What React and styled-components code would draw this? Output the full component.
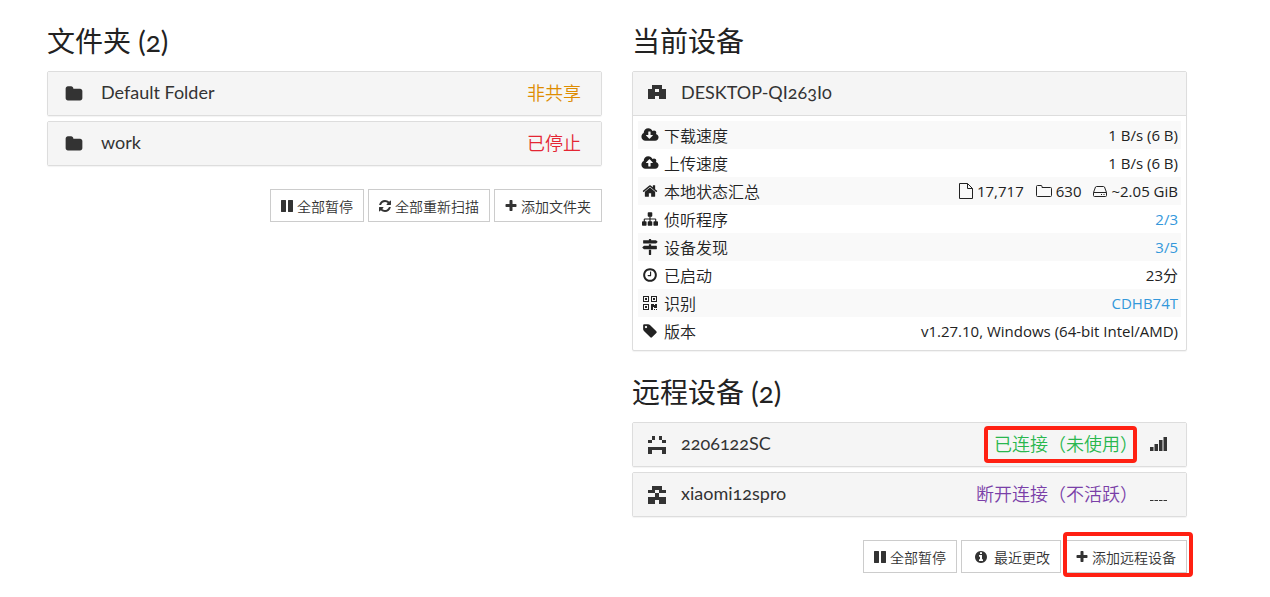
import React from 'react';
import styled, { createGlobalStyle, css } from 'styled-components';

const GlobalStyle = createGlobalStyle`
    * {
        box-sizing: border-box;
    }

    body {
        margin: 0;
        background: #fff;
        color: #222;
        font-family: "Open Sans", "Noto Sans CJK SC", sans-serif;
        font-size: 15px;
        line-height: 20px;
    }
`;

// 1792 units per em, like the icon font
const glyphs = {
    folder: 'M1728 608v704q0 92-66 158t-158 66h-1216q-92 0-158-66t-66-158v-960q0-92 66-158t158-66h320q92 0 158 66t66 158v32h672q92 0 158 66t66 158z',
    pause: 'M1664 192v1408q0 26-19 45t-45 19h-512q-26 0-45-19t-19-45v-1408q0-26 19-45t45-19h512q26 0 45 19t19 45zm-896 0v1408q0 26-19 45t-45 19h-512q-26 0-45-19t-19-45v-1408q0-26 19-45t45-19h512q26 0 45 19t19 45z',
    refresh: 'M1639 1056q0 5-1 7-64 268-268 434.5t-478 166.5q-146 0-282.5-55t-243.5-157l-129 129q-19 19-45 19t-45-19-19-45v-448q0-26 19-45t45-19h448q26 0 45 19t19 45-19 45l-137 137q71 66 161 102t187 36q134 0 250-65t186-179q11-17 53-117 8-23 30-23h192q13 0 22.5 9.5t9.5 22.5zm25-800v448q0 26-19 45t-45 19h-448q-26 0-45-19t-19-45 19-45l138-138q-148-137-349-137-134 0-250 65t-186 179q-11 17-53 117-8 23-30 23h-199q-13 0-22.5-9.5t-9.5-22.5v-7q65-268 270-434.5t480-166.5q146 0 284 55.5t245 156.5l130-129q19-19 45-19t45 19 19 45z',
    plus: 'M1600 736v192q0 40-28 68t-68 28h-416v416q0 40-28 68t-68 28h-192q-40 0-68-28t-28-68v-416h-416q-40 0-68-28t-28-68v-192q0-40 28-68t68-28h416v-416q0-40 28-68t68-28h192q40 0 68 28t28 68v416h416q40 0 68 28t28 68z',
    info: 'M1152 1376v-160q0-14-9-23t-23-9h-96v-512q0-14-9-23t-23-9h-320q-14 0-23 9t-9 23v160q0 14 9 23t23 9h96v320h-96q-14 0-23 9t-9 23v160q0 14 9 23t23 9h448q14 0 23-9t9-23zm-128-896v-160q0-14-9-23t-23-9h-192q-14 0-23 9t-9 23v160q0 14 9 23t23 9h192q14 0 23-9t9-23zm640 416q0 209-103 385.5t-279.5 279.5-385.5 103-385.5-103-279.5-279.5-103-385.5 103-385.5 279.5-279.5 385.5-103 385.5 103 279.5 279.5 103 385.5z',
    download: 'M1216 928q0-14-9-23t-23-9h-224v-352q0-13-9.5-22.5t-22.5-9.5h-192q-13 0-22.5 9.5t-9.5 22.5v352h-224q-13 0-22.5 9.5t-9.5 22.5q0 14 9 23l352 352q9 9 23 9t23-9l351-351q10-12 10-24zm640 224q0 159-112.5 271.5t-271.5 112.5h-1088q-185 0-316.5-131.5t-131.5-316.5q0-130 70-240t188-165q-2-30-2-43 0-212 150-362t362-150q156 0 285.5 87t188.5 231q71-62 166-62 106 0 181 75t75 181q0 76-41 138 130 31 213.5 135.5t83.5 238.5z',
    upload: 'M1216 864q0-14-9-23l-352-352q-9-9-23-9t-23 9l-351 351q-10 12-10 24 0 14 9 23t23 9h224v352q0 13 9.5 22.5t22.5 9.5h192q13 0 22.5-9.5t9.5-22.5v-352h224q13 0 22.5-9.5t9.5-22.5zm640 288q0 159-112.5 271.5t-271.5 112.5h-1088q-185 0-316.5-131.5t-131.5-316.5q0-130 70-240t188-165q-2-30-2-43 0-212 150-362t362-150q156 0 285.5 87t188.5 231q71-62 166-62 106 0 181 75t75 181q0 76-41 138 130 31 213.5 135.5t83.5 238.5z',
    home: 'M1472 992v480q0 26-19 45t-45 19h-384v-384h-256v384h-384q-26 0-45-19t-19-45v-480q0-1 .5-3t.5-3l575-474 575 474q1 2 1 6zm223-69l-62 74q-8 9-21 11h-3q-13 0-21-7l-692-577-692 577q-12 8-24 7-13-2-21-11l-62-74q-8-10-7-23.5t11-21.5l719-599q32-26 76-26t76 26l244 204v-195q0-14 9-23t23-9h192q14 0 23 9t9 23v408l219 182q10 8 11 21.5t-7 23.5z',
    sitemap: 'M1792 1248v320q0 40-28 68t-68 28h-320q-40 0-68-28t-28-68v-320q0-40 28-68t68-28h96v-192h-512v192h96q40 0 68 28t28 68v320q0 40-28 68t-68 28h-320q-40 0-68-28t-28-68v-320q0-40 28-68t68-28h96v-192h-512v192h96q40 0 68 28t28 68v320q0 40-28 68t-68 28h-320q-40 0-68-28t-28-68v-320q0-40 28-68t68-28h96v-192q0-52 38-90t90-38h512v-192h-96q-40 0-68-28t-28-68v-320q0-40 28-68t68-28h320q40 0 68 28t28 68v320q0 40-28 68t-68 28h-96v192h512q52 0 90 38t38 90v192h96q40 0 68 28t28 68z',
    signs: 'M1745 297q10 10 10 23t-10 23l-141 141q-28 28-68 28h-1344q-26 0-45-19t-19-45v-256q0-26 19-45t45-19h576v-64q0-26 19-45t45-19h128q26 0 45 19t19 45v64h512q40 0 68 28zm-977 919h256v512q0 26-19 45t-45 19h-128q-26 0-45-19t-19-45v-512zm832-448q26 0 45 19t19 45v256q0 26-19 45t-45 19h-1344q-40 0-68-28l-141-141q-10-10-10-23t10-23l141-141q28-28 68-28h512v-192h256v192h576z',
    clock: 'M1024 544v448q0 14-9 23t-23 9h-320q-14 0-23-9t-9-23v-64q0-14 9-23t23-9h224v-352q0-14 9-23t23-9h64q14 0 23 9t9 23zm416 352q0-148-73-273t-198-198-273-73-273 73-198 198-73 273 73 273 198 198 273 73 273-73 198-198 73-273zm224 0q0 209-103 385.5t-279.5 279.5-385.5 103-385.5-103-279.5-279.5-103-385.5 103-385.5 279.5-279.5 385.5-103 385.5 103 279.5 279.5 103 385.5z',
    tag: 'M576 448q0-53-37.5-90.5t-90.5-37.5-90.5 37.5-37.5 90.5 37.5 90.5 90.5 37.5 90.5-37.5 37.5-90.5zm1067 576q0 53-37 90l-491 492q-39 37-91 37-53 0-90-37l-715-716q-38-37-64.5-101t-26.5-117v-416q0-52 38-90t90-38h416q53 0 117 26.5t102 64.5l715 714q37 39 37 91z'
};

const Glyph = ({ name, size = 16 }) => (
    <GlyphSvg viewBox="0 0 1792 1792" width={size} height={size} aria-hidden="true">
        <path d={glyphs[name]} />
    </GlyphSvg>
);

const QrGlyph = () => (
    <GlyphSvg viewBox="0 0 16 16" width="16" height="16" aria-hidden="true">
        <path
            fillRule="evenodd"
            d="M1 1h6v6H1zM2 2v4h4V2zM9 1h6v6H9zM10 2v4h4V2zM1 9h6v6H1zM2 10v4h4v-4zM3 3h2v2H3zM11 3h2v2h-2zM3 11h2v2H3zM9 9h3v1h1V9h2v4h-3v-1h-1v3H9zM12 14h1v1h-1zM14 14h1v1h-1z"
        />
    </GlyphSvg>
);

const FileGlyph = () => (
    <LineSvg viewBox="0 0 14 16" width="14" height="16" aria-hidden="true">
        <path d="M.5.5h8l5 5v10H.5zM8.5.5v5h5" />
    </LineSvg>
);

const FolderGlyph = () => (
    <LineSvg viewBox="0 0 16 16" width="16" height="16" aria-hidden="true">
        <path d="M.5 3.5q0-1 1-1h3.500q1 0 1 1v1h8.500q1 0 1 1v7q0 1-1 1h-13q-1 0-1-1z" />
    </LineSvg>
);

const DiskGlyph = () => (
    <LineSvg viewBox="0 0 14 16" width="14" height="16" aria-hidden="true">
        <path d="M.5 9.500h13v3q0 1-1 1h-11q-1 0-1-1zM.5 9.500l2-5.500q.3-.5 1-.5h7q.7 0 1 .5l2 5.500M8 11.500h1M10.500 11.500h1" />
    </LineSvg>
);

// five columns by five rows, "#" is a filled square
const Identicon = ({ rows }) => (
    <GlyphSvg viewBox="0 0 5 5" width="18" height="18" shapeRendering="crispEdges" aria-hidden="true">
        {rows.map((row, y) =>
            row.split('').map((cell, x) => cell === '#' && <rect key={`${x}-${y}`} x={x} y={y} width="1" height="1" />)
        )}
    </GlyphSvg>
);

const Signal = ({ bars }) => (
    <GlyphSvg viewBox="0 0 18 18" width="18" height="18" aria-hidden="true">
        {bars.map((height, i) => (
            <rect key={i} x={i * 4.5} y={15 - height} width="3.5" height={height} />
        ))}
    </GlyphSvg>
);

const LocalState = () => (
    <Totals>
        <Total><FileGlyph />17,717</Total>
        <Total><FolderGlyph />630</Total>
        <Total><DiskGlyph />~2.05 GiB</Total>
    </Totals>
);

const folders = [
    { name: 'Default Folder', status: '非共享', color: '#de8c00' },
    { name: 'work', status: '已停止', color: '#e42533' }
];

const devices = [
    {
        name: '2206122SC',
        status: '已连接（未使用）',
        color: '#29b74e',
        marker: '-7px 1px -6px -10px',
        icon: ['.#.#.', '#...#', '.....', '#####', '#...#'],
        bars: [4, 7, 11, 14]
    },
    {
        name: 'xiaomi12spro',
        status: '断开连接（不活跃）',
        color: '#7a3fa8',
        icon: ['.###.', '##.##', '..#..', '#####', '##.##'],
        bars: [1, 1, 1, 1]
    }
];

const details = [
    { icon: <Glyph name="download" />, label: '下载速度', value: '1 B/s (6 B)' },
    { icon: <Glyph name="upload" />, label: '上传速度', value: '1 B/s (6 B)' },
    { icon: <Glyph name="home" />, label: '本地状态汇总', value: <LocalState /> },
    { icon: <Glyph name="sitemap" />, label: '侦听程序', value: '2/3', link: true },
    { icon: <Glyph name="signs" />, label: '设备发现', value: '3/5', link: true },
    { icon: <Glyph name="clock" />, label: '已启动', value: '23分' },
    { icon: <QrGlyph />, label: '识别', value: 'CDHB74T', link: true },
    { icon: <Glyph name="tag" />, label: '版本', value: 'v1.27.10, Windows (64-bit Intel/AMD)' }
];

function App() {
    return (
        <>
            <GlobalStyle />
            <Page>
                <Column>
                    <Heading>文件夹 (2)</Heading>
                    <PanelGroup>
                        {folders.map((folder) => (
                            <Panel key={folder.name}>
                                <PanelHeading type="button">
                                    <PanelIcon><Glyph name="folder" size={18} /></PanelIcon>
                                    <PanelTitle>{folder.name}</PanelTitle>
                                    <Status $color={folder.color}>{folder.status}</Status>
                                </PanelHeading>
                            </Panel>
                        ))}
                    </PanelGroup>
                    <Actions>
                        <Button type="button"><Glyph name="pause" size={14} />全部暂停</Button>
                        <Button type="button"><Glyph name="refresh" size={14} />全部重新扫描</Button>
                        <Button type="button"><Glyph name="plus" size={14} />添加文件夹</Button>
                    </Actions>
                </Column>
                <Column>
                    <Heading>当前设备</Heading>
                    <Panel>
                        <PanelHeading type="button" $open>
                            <PanelIcon $narrow><Identicon rows={['.###.', '##.##', '#####', '##.##', '.....']} /></PanelIcon>
                            <PanelTitle>DESKTOP-QI263I0</PanelTitle>
                        </PanelHeading>
                        <PanelBody>
                            <Details>
                                <tbody>
                                    {details.map((row) => (
                                        <tr key={row.label}>
                                            <th scope="row"><Label><RowIcon>{row.icon}</RowIcon>{row.label}</Label></th>
                                            <td>{row.link ? <Link href="#">{row.value}</Link> : row.value}</td>
                                        </tr>
                                    ))}
                                </tbody>
                            </Details>
                        </PanelBody>
                    </Panel>
                    <Heading>远程设备 (2)</Heading>
                    <PanelGroup>
                        {devices.map((device) => (
                            <Panel key={device.name}>
                                <PanelHeading type="button" $signal>
                                    <PanelIcon $narrow><Identicon rows={device.icon} /></PanelIcon>
                                    <PanelTitle>{device.name}</PanelTitle>
                                    <Status $color={device.color} $marker={device.marker}>{device.status}</Status>
                                    <Signal bars={device.bars} />
                                </PanelHeading>
                            </Panel>
                        ))}
                    </PanelGroup>
                    <Actions>
                        <Button type="button"><Glyph name="pause" size={14} />全部暂停</Button>
                        <Button type="button" $wide><Glyph name="info" size={14} />最近更改</Button>
                        <Button type="button" $marker="-9px -7px -5px -3px"><Glyph name="plus" size={14} />添加远程设备</Button>
                    </Actions>
                </Column>
            </Page>
        </>
    );
}

export default App;


const GlyphSvg = styled.svg`
    display: block;
    flex: none;
    fill: currentColor;
    overflow: visible;
`;

const LineSvg = styled.svg`
    display: block;
    flex: none;
    fill: none;
    stroke: currentColor;
`;

//Red frame around the parts to look at
const marker = css`
    position: relative;
    &::after {
        content: '';
        position: absolute;
        inset: ${props => props.$marker};
        border: 4px solid #ff2012;
        border-radius: 4px;
        pointer-events: none;
    }
`;

//Layout
const Page = styled.main`
    display: grid;
    grid-template-columns: 1fr 1fr;
    gap: 30px;
    padding: 24px 83px 24px 47px;
`;

const Column = styled.section`
    min-width: 0;
`;

const Heading = styled.h3`
    margin: 0 0 12px;
    font-family: Lato, "Noto Sans CJK SC", sans-serif;
    font-size: 28px;
    font-weight: 400;
    font-variant-numeric: oldstyle-nums;
    line-height: 35px;
`;

//Panels
const PanelGroup = styled.div`
    display: grid;
    gap: 5px;
`;

const Panel = styled.div`
    border: 1px solid #ddd;
    border-radius: 2px;
    background: #fff;
    box-shadow: 0 1px 1px rgba(0, 0, 0, 0.05);

    & + ${Heading} {
        margin-top: 24px;
    }
`;

const PanelHeading = styled.button`
    display: flex;
    align-items: center;
    width: 100%;
    height: ${props => props.$open ? '44px' : '43px'};
    padding: 0 ${props => props.$signal ? '18px' : '20px'} 0 15px;
    border: 0;
    border-bottom: ${props => props.$open ? '1px solid #ddd' : '0'};
    background: #f5f5f5;
    color: #333;
    font-family: Lato, "Noto Sans CJK SC", sans-serif;
    font-size: 18px;
    font-variant-numeric: oldstyle-nums;
    line-height: 20px;
    text-align: left;
    cursor: pointer;
`;

const PanelIcon = styled.span`
    flex: none;
    width: ${props => props.$narrow ? '33px' : '38px'};
    padding-left: ${props => props.$narrow ? '0' : '2px'};
`;

const PanelTitle = styled.span`
    flex: 1;
    min-width: 0;
    padding-bottom: 4px;
`;

const Status = styled.span`
    padding-bottom: 4px;
    color: ${props => props.$color};
    font-family: "Noto Sans CJK SC", sans-serif;
    font-weight: 350;

    & + svg {
        margin-left: 12px;
    }

    ${props => props.$marker && marker}
`;

const PanelBody = styled.div`
    padding: 5px;
`;

//Details of this device
const Details = styled.table`
    width: 100%;
    border-collapse: collapse;

    tr:nth-child(odd) {
        background: #f9f9f9;
    }

    th,
    td {
        height: 28px;
        padding: 0 3px;
        font-weight: 400;
    }

    th {
        font-family: "Noto Sans CJK SC", sans-serif;
        font-size: 16px;
        font-weight: 350;
        text-align: left;
    }

    td {
        text-align: right;
    }
`;

const Label = styled.span`
    display: flex;
    align-items: center;
    gap: 5px;
`;

const RowIcon = styled.span`
    display: flex;
    justify-content: center;
    width: 18px;
`;

const Totals = styled.span`
    display: flex;
    justify-content: flex-end;
    gap: 12px;
`;

const Total = styled.span`
    display: flex;
    align-items: center;
    gap: 4px;
`;

const Link = styled.a`
    color: #3498db;
    text-decoration: none;
`;

//Buttons
const Actions = styled.div`
    display: flex;
    justify-content: flex-end;
    gap: 4px;
    margin-top: 23px;
`;

const Button = styled.button`
    display: flex;
    align-items: center;
    gap: ${props => props.$wide ? '6px' : '3px'};
    height: 33px;
    padding: 0 10px 0 ${props => props.$wide ? '12px' : '9px'};
    border: 1px solid #ccc;
    background: #fff;
    color: #333;
    font-family: "Noto Sans CJK SC", sans-serif;
    font-size: 14px;
    font-weight: 350;
    line-height: 20px;
    cursor: pointer;
    ${props => props.$marker && marker}
`;
